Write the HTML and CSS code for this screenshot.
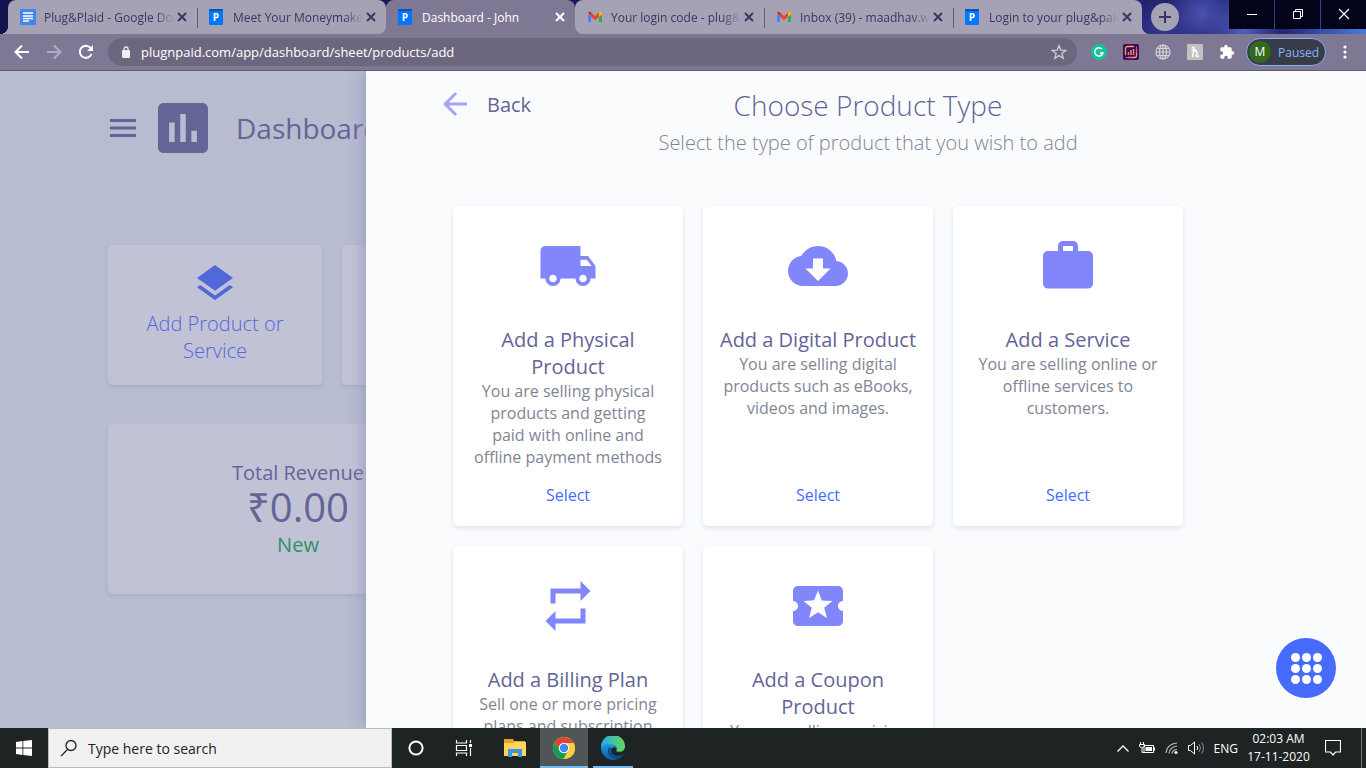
FILE: index.html
```html
<!DOCTYPE html>
<html lang="en">
  <head>
    <meta charset="utf-8">
    <title>Dashboard - John</title>
    <link rel="stylesheet" href="styles.css">
  </head>
  <body>
    <!-- shared icons -->
    <svg class="defs" width="0" height="0">
      <symbol id="close" viewBox="0 0 16 16"><path d="M4 4l8 8M12 4l-8 8" stroke="currentColor" stroke-width="2" fill="none"/></symbol>
      <symbol id="gmail" viewBox="0 0 16 16">
        <path d="M1 5v8h3V7z" fill="#4285f4"/><path d="M12 7v6h3V5z" fill="#34a853"/>
        <path d="M1 3.500L4 7V3.500Q2 2 1 4z" fill="#c5221f"/><path d="M12 3.500Q14 2 15 4v1.500L12 8z" fill="#fbbc04"/>
        <path d="M4 3.500L8 7l4-3.500V8l-4 3.200L4 8z" fill="#ea4335"/>
      </symbol>
    </svg>

    <header class="tabs">
      <div class="tab first">
        <svg class="fav" viewBox="0 0 16 16"><rect width="16" height="16" rx="1" fill="#4285f4"/><path d="M3 4h10M3 7h10M3 9.500h10M3 12h6" stroke="#fff" stroke-width="1.500"/></svg>
        <span class="tab-title">Plug&amp;Plaid - Google Docs</span>
        <button class="tab-close" aria-label="Close tab"><svg><use href="#close"/></svg></button>
      </div>
      <div class="tab line end">
        <span class="fav plug">P</span>
        <span class="tab-title">Meet Your Moneymaker</span>
        <button class="tab-close" aria-label="Close tab"><svg><use href="#close"/></svg></button>
      </div>
      <div class="tab active">
        <span class="fav plug">P</span>
        <span class="tab-title">Dashboard - John</span>
        <button class="tab-close" aria-label="Close tab"><svg><use href="#close"/></svg></button>
      </div>
      <div class="tab start">
        <svg class="fav"><use href="#gmail"/></svg>
        <span class="tab-title">Your login code - plug&amp;paid</span>
        <button class="tab-close" aria-label="Close tab"><svg><use href="#close"/></svg></button>
      </div>
      <div class="tab line">
        <svg class="fav"><use href="#gmail"/></svg>
        <span class="tab-title">Inbox (39) - maadhav.work</span>
        <button class="tab-close" aria-label="Close tab"><svg><use href="#close"/></svg></button>
      </div>
      <div class="tab line last">
        <span class="fav plug">P</span>
        <span class="tab-title">Login to your plug&amp;paid</span>
        <button class="tab-close" aria-label="Close tab"><svg><use href="#close"/></svg></button>
      </div>
      <button class="new-tab" aria-label="New tab"><svg width="14" height="14" viewBox="0 0 14 14"><path d="M7 1v12M1 7h12" stroke="#3c3560" stroke-width="2"/></svg></button>
      <div class="window-buttons">
        <button aria-label="Minimize"><svg width="12" height="12"><path d="M1 6.500h10" stroke="#fff"/></svg></button>
        <button aria-label="Restore"><svg width="12" height="12" fill="none" stroke="#fff"><path d="M1.500 3.500h7v7h-7zM3.500 3.500v-2h7v7h-2"/></svg></button>
        <button aria-label="Close"><svg width="12" height="12"><path d="M1 1l10 10M11 1L1 11" stroke="#fff" stroke-width="1.200"/></svg></button>
      </div>
    </header>

    <nav class="toolbar">
      <div class="tools">
        <button aria-label="Back"><svg width="16" height="16" viewBox="0 0 16 16"><path d="M15 8H2M8 1.500L1.500 8 8 14.500" fill="none" stroke="#fff" stroke-width="2"/></svg></button>
        <button aria-label="Forward"><svg width="16" height="16" viewBox="0 0 16 16"><path d="M1 8h13M8 1.500L14.500 8 8 14.500" fill="none" stroke="#b0abc0" stroke-width="2"/></svg></button>
        <button aria-label="Reload"><svg width="16" height="16" viewBox="0 0 16 16"><path d="M13.500 10A6 6 0 1 1 12.500 4" fill="none" stroke="#fff" stroke-width="2"/><path d="M15 1v6H9z" fill="#fff"/></svg></button>
      </div>
      <div class="address">
        <svg width="10" height="12" viewBox="0 0 10 12"><rect x="1" y="4" width="8" height="8" rx="1" fill="#eee"/><path d="M3 5V3a2 2 0 0 1 4 0v2" fill="none" stroke="#eee" stroke-width="1.300"/></svg>
        <input type="text" aria-label="Address" value="plugnpaid.com/app/dashboard/sheet/products/add">
        <svg width="16" height="16" viewBox="0 0 16 16"><path d="M8 1.500l1.800 4.600 4.900.3-3.800 3.100 1.300 4.800L8 11.600l-4.200 2.700 1.300-4.800L1.300 6.400l4.900-.3z" fill="none" stroke="#cfccd6" stroke-width="1.300"/></svg>
      </div>
      <div class="extensions">
        <svg viewBox="0 0 16 16"><circle cx="8" cy="8" r="8" fill="#15c39a"/><path d="M11 5a4.200 4.200 0 1 0 1 4H9" fill="none" stroke="#fff" stroke-width="1.500"/></svg>
        <svg viewBox="0 0 16 16"><rect width="16" height="16" rx="2" fill="#3b0d52"/><path d="M11 2.500H4.500a2 2 0 0 0-2 2V11M13.500 5v6.500a2 2 0 0 1-2 2H5" fill="none" stroke="#f59a70" stroke-width="1.300"/><path d="M2.500 13.500H9M13.500 2.500V9" stroke="#e84d9c"/><path d="M5.500 11V8M8 11V6M10.500 11V5" stroke="#f7845f" stroke-width="1.500"/></svg>
        <svg viewBox="0 0 16 16" fill="none" stroke="#d5d3da" stroke-width="1.200"><circle cx="8" cy="8" r="7"/><ellipse cx="8" cy="8" rx="3.500" ry="7"/><path d="M8 1v14M1 8h14M2 4.500h12M2 11.500h12"/></svg>
        <svg viewBox="0 0 16 16"><rect width="16" height="16" rx="1" fill="#c1c1c1"/><path d="M5 4q2-2 2 1l-1.500 8M6 9q2-3 3.500-1.500T9 12q1 1.500 3-.5M4.500 6h5" fill="none" stroke="#fff" stroke-width="1.400"/></svg>
        <svg viewBox="0 0 24 24"><path fill="#fff" d="M20.500 11H19V7c0-1.100-.9-2-2-2h-4V3.500a2.500 2.500 0 0 0-5 0V5H4c-1.100 0-2 .9-2 2v3.800h1.500a2.700 2.700 0 0 1 0 5.400H2V20c0 1.100.9 2 2 2h3.800v-1.500a2.700 2.700 0 0 1 5.400 0V22H17c1.100 0 2-.9 2-2v-4h1.500a2.500 2.500 0 0 0 0-5z"/></svg>
      </div>
      <button class="profile"><span class="avatar">M</span>Paused</button>
      <button class="dots" aria-label="Menu"><svg width="4" height="16" fill="#fff"><circle cx="2" cy="3" r="1.600"/><circle cx="2" cy="8" r="1.600"/><circle cx="2" cy="13" r="1.600"/></svg></button>
    </nav>

    <main class="app">
      <section class="dashboard">
        <div class="dash-header">
          <svg width="26" height="18" viewBox="3 6 18 12" preserveAspectRatio="none"><path fill="#646496" d="M3 18h18v-2H3v2zm0-5h18v-2H3v2zm0-7v2h18V6H3z"/></svg>
          <svg class="chart" width="50" height="50" viewBox="3 3 18 18"><path fill="#646496" d="M19 3H5c-1.100 0-2 .9-2 2v14c0 1.100.9 2 2 2h14c1.100 0 2-.9 2-2V5c0-1.100-.9-2-2-2zM9 17H7v-7h2v7zm4 0h-2V7h2v10zm4 0h-2v-4h2v4z"/></svg>
          <h1>Dashboard</h1>
        </div>
        <div class="quick">
          <a href="#" class="quick-card">
            <svg viewBox="3 2 18 19" preserveAspectRatio="none"><path fill="#5168d8" d="M11.990 18.540l-7.370-5.730L3 14.070l9 7 9-7-1.630-1.270-7.380 5.740zM12 16l7.360-5.730L21 9l-9-7-9 7 1.630 1.270L12 16z"/></svg>
            Add Product or Service
          </a>
          <div class="quick-card"></div>
        </div>
        <div class="stats">
          <div class="revenue">
            <div>Total Revenue</div>
            <div class="amount">₹0.00</div>
            <div class="new">New</div>
          </div>
        </div>
      </section>

      <section class="sheet">
        <div class="sheet-header">
          <button class="back">
            <svg width="24" height="24" viewBox="4 4 16 16"><path fill="#a3a5fb" d="M20 11H7.830l5.590-5.590L12 4l-8 8 8 8 1.410-1.410L7.830 13H20v-2z"/></svg>
            Back
          </button>
          <div class="heading">
            <h2>Choose Product Type</h2>
            <p>Select the type of product that you wish to add</p>
          </div>
        </div>
        <div class="products">
          <div class="card">
            <svg viewBox="0 0 24 24"><path d="M20 8h-3V4H3c-1.100 0-2 .9-2 2v11h2c0 1.660 1.340 3 3 3s3-1.340 3-3h6c0 1.660 1.340 3 3 3s3-1.340 3-3h2v-5l-3-4zM6 18.500c-.83 0-1.500-.67-1.500-1.500s.67-1.500 1.500-1.500 1.500.67 1.500 1.500-.67 1.500-1.500 1.500zm13.500-9l1.960 2.500H17V9.500h2.500zm-1.500 9c-.83 0-1.500-.67-1.500-1.500s.67-1.500 1.500-1.500 1.500.67 1.500 1.500-.67 1.500-1.500 1.500z"/></svg>
            <h3>Add a Physical Product</h3>
            <p>You are selling physical products and getting paid with online and offline payment methods</p>
            <a href="#">Select</a>
          </div>
          <div class="card">
            <svg viewBox="0 0 24 24"><path d="M19.350 10.040C18.670 6.590 15.640 4 12 4 9.110 4 6.600 5.640 5.350 8.040 2.340 8.360 0 10.910 0 14c0 3.310 2.690 6 6 6h13c2.760 0 5-2.240 5-5 0-2.640-2.050-4.780-4.650-4.960zM17 13l-5 5-5-5h3V9h4v4h3z"/></svg>
            <h3>Add a Digital Product</h3>
            <p>You are selling digital products such as eBooks, videos and images.</p>
            <a href="#">Select</a>
          </div>
          <div class="card">
            <svg viewBox="0 0 24 24"><path d="M20 6h-4V4c0-1.110-.89-2-2-2h-4c-1.110 0-2 .89-2 2v2H4c-1.110 0-2 .89-2 2v11c0 1.110.89 2 2 2h16c1.110 0 2-.89 2-2V8c0-1.110-.89-2-2-2zm-6 0h-4V4h4v2z"/></svg>
            <h3>Add a Service</h3>
            <p>You are selling online or offline services to customers.</p>
            <a href="#">Select</a>
          </div>
          <div class="card">
            <svg viewBox="0 0 24 24"><path d="M7 7h10v3l4-4-4-4v3H5v6h2V7zm10 10H7v-3l-4 4 4 4v-3h12v-6h-2v4z"/></svg>
            <h3>Add a Billing Plan</h3>
            <p>Sell one or more pricing plans and subscription products.</p>
            <a href="#">Select</a>
          </div>
          <div class="card">
            <svg viewBox="0 0 24 24"><path d="M20 12c0-1.100.9-2 2-2V6c0-1.100-.9-2-2-2H4c-1.100 0-1.990.9-1.990 2v4c1.100 0 1.990.9 1.990 2s-.89 2-2 2v4c0 1.100.9 2 2 2h16c1.100 0 2-.9 2-2v-4c-1.100 0-2-.9-2-2zm-4.420 4.800L12 14.500l-3.580 2.300 1.080-4.120-3.290-2.690 4.240-.25L12 5.800l1.540 3.950 4.240.25-3.290 2.690 1.090 4.110z"/></svg>
            <h3>Add a Coupon Product</h3>
            <p>You are selling a pricing coupon to your customers.</p>
            <a href="#">Select</a>
          </div>
        </div>
      </section>

      <button class="fab" aria-label="Apps">
        <i></i><i></i><i></i><i></i><i></i><i></i><i></i><i></i><i></i>
      </button>
    </main>

    <footer class="taskbar">
      <button class="task" aria-label="Start"><svg width="16" height="16" viewBox="0 0 16 16" fill="#fff"><path d="M0 2l6.500-.9v6.500H0zM7.300 1L16 0v7.600H7.300zM0 8.400h6.500v6.500L0 14zM7.300 8.400H16V16l-8.700-1z"/></svg></button>
      <label class="search">
        <svg width="18" height="18" viewBox="0 0 18 18" fill="none" stroke="#222" stroke-width="1.300"><circle cx="11" cy="6.500" r="5"/><path d="M7.500 10.500L1 17"/></svg>
        <input type="text" aria-label="Search" placeholder="Type here to search">
      </label>
      <button class="task" aria-label="Cortana"><svg width="18" height="18"><circle cx="9" cy="9" r="6.600" fill="none" stroke="#fff" stroke-width="2"/></svg></button>
      <button class="task" aria-label="Task View"><svg width="18" height="18" fill="none" stroke="#fff" stroke-width="1.200"><path d="M1.500 1v3h10V1M1.500 17v-3h10v3M1.500 6.500h10v5h-10zM15.500 1v3M15.500 9v8"/><path d="M14 5h3v3h-3z" fill="#fff" stroke="none"/></svg></button>
      <button class="task files" aria-label="File Explorer"><svg width="22" height="18" viewBox="0 0 22 18"><path d="M0 0h9l1 2h11v15H0z" fill="#e6a416"/><path d="M0 4h9l1-1h12v14H0z" fill="#ffd562"/><path d="M4 18v-8h14v8h-4v-4H8v4z" fill="#3a96dd"/></svg></button>
      <button class="task current" aria-label="Chrome"><svg width="22" height="22" viewBox="0 0 22 22"><circle cx="11" cy="11" r="11" fill="#ffcd40"/><path d="M11 11H22A11 11 0 0 0 1.500 5.500L6.500 13z" fill="#db4437"/><path d="M1.500 5.500A11 11 0 0 0 10.500 22l5-8.500H7z" fill="#0f9d58"/><path d="M11 6h9.800q1.200 2 1.200 5 0 10-11.500 11l5-8.500z" fill="#ffcd40"/><circle cx="11" cy="11" r="5.200" fill="#fff"/><circle cx="11" cy="11" r="4.200" fill="#4285f4"/></svg></button>
      <button class="task edge" aria-label="Edge">
        <svg width="24" height="24" viewBox="0 0 24 24">
          <defs>
            <linearGradient id="edge-top"><stop offset="0" stop-color="#2aa9e8"/><stop offset="1" stop-color="#62d957"/></linearGradient>
            <linearGradient id="edge-body" x2="0" y2="1"><stop offset="0" stop-color="#1b9de2"/><stop offset="1" stop-color="#0c59a4"/></linearGradient>
          </defs>
          <path d="M0 11A12 12 0 0 1 24 10.500c0 5-5 6.500-9 4.500 2-2 0-6-4-6Q5 8 0 13z" fill="url(#edge-top)"/>
          <path d="M0 12q3-5 8-4 6 0 7 4-4-2-5 2 0 6 7 6 3 0 5-1.500A12 12 0 0 1 0 12z" fill="url(#edge-body)"/>
          <path d="M8 11q-3 5 1 9t8 3.200q4-2 5.500-5-5 2.800-9.500.800-5-3-3-7z" fill="#114a8b"/>
        </svg>
      </button>
      <div class="tray">
        <svg width="12" height="7"><path d="M.500 6.500L6 1l5.500 5.500" fill="none" stroke="#fff" stroke-width="1.300"/></svg>
        <svg width="16" height="12" fill="none" stroke="#fff"><path d="M5 3.500h9.500v7h-9.500zM15.500 5.500v3M1.500 0v3M4.500 0v3M.500 2.500h5v2l-2 1h-1l-2-1zM3 5.500v5h2"/><path d="M6.500 5h6.500v4H6.500z" fill="#fff" stroke="none"/></svg>
        <svg width="13" height="12" fill="none" stroke="#bbb" stroke-width="1.200"><path d="M1 11Q2 2 12 1M4 11.500Q5 5 12 4M7 11.500q1-4 5-4"/><circle cx="11" cy="10.500" r="1.500" fill="#fff" stroke="none"/></svg>
        <svg width="16" height="14" fill="none" stroke="#fff"><path d="M.500 4.500h2l4-3.500v12l-4-3.500h-2z"/><path d="M9 5q1.500 2 0 4"/><path d="M11 3q3 4 0 8M13.500 1q4 6 0 12" stroke="#888"/></svg>
        <span>ENG</span>
      </div>
      <div class="clock"><div>02:03 AM</div><div>17-11-2020</div></div>
      <button class="notes" aria-label="Notifications"><svg width="16" height="16"><path d="M.500.500h15v11.500h-5L8 15l-2.500-3h-5z" fill="none" stroke="#fff" stroke-width="1.200"/></svg></button>
    </footer>
  </body>
</html>
```
FILE: styles.css
```css
* {
  box-sizing: border-box;
}
body {
  margin: 0;
  height: 100vh;
  display: flex;
  flex-direction: column;
  overflow: hidden;
  font-family: "Open Sans", "Noto Sans", sans-serif;
}
h1, h2, h3, p {
  margin: 0;
  font-weight: 400;
}
button {
  border: none;
  padding: 0;
  background: none;
  font-family: inherit;
}
svg {
  flex: none;
}
a {
  text-decoration: none;
}
.defs {
  position: absolute;
}

/* browser tabs */
.tabs {
  position: relative;
  z-index: 0;
  display: flex;
  height: 34px;
  padding-left: 8px;
  background: radial-gradient(circle at 88% 40%, #4a52b0, transparent 3%),
    radial-gradient(circle at 91% 90%, #4f62bd, transparent 3%),
    radial-gradient(circle at 85% 100%, #33388f, transparent 3%),
    radial-gradient(circle at 100% 100%, #4a7be0, transparent 6%),
    linear-gradient(90deg, #17134f, #1f1c62 70%, #27297c);
}
.tab {
  position: relative;
  display: flex;
  align-items: center;
  flex: 0 1 189px;
  min-width: 0;
  padding: 0 7px 0 12px;
  background: #a6a2b6;
  color: #3c3560;
  font-size: 12px;
}
.tab.first,
.tab.start {
  border-top-left-radius: 8px;
}
.tab.start {
  border-bottom-left-radius: 8px;
}
.tab.end {
  border-radius: 0 8px 8px 0;
}
.tab.last {
  border-top-right-radius: 8px;
}
.tab.active {
  background: #7f7894;
  color: #fff;
  border-radius: 8px 8px 0 0;
}
/* feet of the active tab, under the corners next to it */
.tab.active::before,
.tab.active::after {
  content: "";
  position: absolute;
  z-index: -1;
  bottom: 0;
  width: 8px;
  height: 8px;
  background: #7f7894;
}
.tab.active::before {
  left: -8px;
}
.tab.active::after {
  right: -8px;
}
.tab.first::before,
.tab.last::after {
  content: "";
  position: absolute;
  bottom: 0;
  width: 8px;
  height: 8px;
}
.tab.first::before {
  left: -8px;
  background: radial-gradient(circle at 0 0, transparent 8px, #a6a2b6 8px);
}
.tab.last::after {
  right: -8px;
  background: radial-gradient(circle at 100% 0, transparent 8px, #a6a2b6 8px);
}
.tab.line::before {
  content: "";
  position: absolute;
  left: 0;
  top: 8px;
  width: 1px;
  height: 20px;
  background: #625b80;
}
.fav {
  width: 16px;
  height: 16px;
  margin-right: 8px;
  flex: none;
}
.plug {
  width: 14px;
  margin-right: 10px;
  border-top: 2px solid #0056b8;
  border-radius: 1px;
  background: #0077ff;
  color: #fff;
  font-size: 10px;
  font-weight: 700;
  line-height: 13px;
  text-align: center;
}
.tab-title {
  flex: 1;
  overflow: hidden;
  white-space: nowrap;
  mask-image: linear-gradient(90deg, #000 86%, transparent);
}
.active .tab-title {
  mask-image: none;
}
.tab-close {
  width: 16px;
  height: 16px;
  color: inherit;
}
.tab-close svg {
  display: block;
  width: 16px;
  height: 16px;
}
.new-tab {
  display: flex;
  align-items: center;
  justify-content: center;
  flex: none;
  width: 28px;
  height: 28px;
  margin: 3px 0 0 9px;
  border-radius: 50%;
  background: #a6a2b6;
}
.window-buttons {
  display: flex;
  gap: 1px;
  height: 29px;
  margin-left: auto;
  background: #2c4496;
}
.window-buttons button {
  width: 45px;
  background: #03041a;
}

/* address bar */
.toolbar {
  display: flex;
  align-items: center;
  height: 37px;
  padding: 0 11px 0 14px;
  background: #7f7894;
  border-bottom: 1px solid #5f5a74;
}
.tools {
  display: flex;
  gap: 16px;
  margin-right: 14px;
}
.tools svg {
  display: block;
}
.address {
  display: flex;
  align-items: center;
  gap: 10px;
  flex: 1;
  height: 28px;
  padding: 0 10px 0 13px;
  border-radius: 14px;
  background: #6c677e;
}
.address input {
  flex: 1;
  border: none;
  outline: none;
  background: none;
  color: #fff;
  font: 13px "Open Sans", sans-serif;
  padding: 0;
}
.extensions {
  display: flex;
  gap: 16px;
  margin: 0 11px 0 14px;
}
.extensions svg {
  width: 16px;
  height: 16px;
}
.profile {
  display: flex;
  align-items: center;
  gap: 7px;
  width: 80px;
  height: 28px;
  padding-left: 2px;
  border: 1px solid #7fb0f5;
  border-radius: 14px;
  background: #383b48;
  color: #8ab4f8;
  font-size: 12px;
}
.avatar {
  width: 22px;
  height: 22px;
  border-radius: 50%;
  background: #33691e;
  color: #fff;
  line-height: 22px;
}
.dots {
  width: 20px;
  margin-left: 9px;
}
.dots svg {
  display: block;
  margin: auto;
}

/* page */
.app {
  position: relative;
  flex: 1;
  min-height: 0;
  overflow: hidden;
  background: #b8bcd1;
}
.dashboard {
  padding: 32px 108px;
  color: #646496;
}
.dash-header {
  display: flex;
  align-items: center;
  height: 50px;
  padding-left: 2px;
}
.chart {
  margin: 0 28px 0 22px;
}
.dash-header h1 {
  font-size: 28px;
}
.quick {
  display: grid;
  grid-template-columns: repeat(5, 1fr);
  gap: 20px;
  margin-top: 92px;
}
.quick-card,
.revenue {
  border-radius: 5px;
  background: #c2c2d7;
  box-shadow: 0 2px 4px #a5aecb;
  text-align: center;
  font-size: 20px;
  line-height: 27px;
}
.quick-card {
  display: flex;
  flex-direction: column;
  align-items: center;
  height: 140px;
  padding: 20px 30px;
  color: #5168d8;
  font-weight: 300;
}
.quick-card svg {
  width: 36px;
  height: 35px;
  margin-bottom: 10px;
}
.stats {
  display: grid;
  grid-template-columns: repeat(3, 1fr);
  gap: 5px;
  margin-top: 39px;
}
.revenue {
  height: 170px;
  padding-top: 35px;
}
.amount {
  font-size: 40px;
  line-height: 42px;
}
.new {
  margin-top: 3px;
  color: #2b9267;
}

/* sheet that slides over the dashboard */
.sheet {
  position: absolute;
  top: 0;
  right: 0;
  bottom: 0;
  width: 1000px;
  max-width: 100%;
  padding: 15px 73px 0 77px;
  overflow: hidden;
  background: #fafbfd;
  box-shadow: 0 0 16px #8f92b8;
}
.sheet-header {
  display: grid;
  grid-template-columns: 1fr auto 1fr;
  align-items: start;
}
.back {
  display: flex;
  align-items: center;
  gap: 20px;
  justify-self: start;
  height: 36px;
  color: #646496;
  font-size: 20px;
}
.heading {
  text-align: center;
}
.heading h2 {
  color: #646496;
  font-size: 28px;
  font-weight: 300;
  line-height: 38px;
}
.heading p {
  margin-top: 5px;
  color: #7f8596;
  font-size: 20px;
  font-weight: 300;
  line-height: 27px;
}
.products {
  display: grid;
  grid-template-columns: repeat(auto-fill, 230px);
  gap: 20px;
  margin-top: 50px;
  padding: 0 10px;
}
.card {
  display: flex;
  flex-direction: column;
  align-items: center;
  min-height: 320px;
  padding: 30px 16px 20px;
  border-radius: 5px;
  background: #fff;
  box-shadow: 0 2px 5px #dbe5f0;
  text-align: center;
}
.card svg {
  width: 60px;
  height: 60px;
  margin-bottom: 30px;
  fill: #8286fb;
}
.card h3 {
  color: #646496;
  font-size: 20px;
  line-height: 27px;
}
.card p {
  padding: 0 4px;
  color: #7f8596;
  font-size: 16px;
  line-height: 22px;
}
.card a {
  margin-top: auto;
  color: #476bff;
  font-size: 16px;
  line-height: 22px;
}
.fab {
  position: absolute;
  right: 30px;
  bottom: 30px;
  display: grid;
  grid-template-columns: repeat(3, 9px);
  gap: 2px;
  place-content: center;
  width: 60px;
  height: 60px;
  border-radius: 50%;
  background: #476bff;
}
.fab i {
  width: 9px;
  height: 9px;
  border-radius: 50%;
  background: #fff;
}

/* windows taskbar */
.taskbar {
  display: flex;
  height: 40px;
  background: #1e2324;
  color: #fff;
  font-size: 12px;
}
.search {
  display: flex;
  align-items: center;
  gap: 10px;
  width: 344px;
  padding-left: 11px;
  border: 1px solid #bbb;
  background: #f1f1f1;
}
.search input {
  flex: 1;
  border: none;
  outline: none;
  background: none;
  padding: 0;
  font: 14px "Open Sans", sans-serif;
}
.search input::placeholder {
  color: #222;
}
.task {
  display: flex;
  align-items: center;
  justify-content: center;
  width: 48px;
  padding-top: 2px;
  border-bottom: 2px solid transparent;
}
.files {
  margin-left: 3px;
}
.current {
  margin-left: 1px;
  background: #505658;
  border-color: #76b9ed;
}
.edge {
  width: 40px;
  margin-left: 5px;
  border-color: #76b9ed;
}
.tray {
  display: flex;
  align-items: center;
  gap: 10px;
  margin-left: auto;
}
.clock {
  width: 81px;
  padding-top: 2px;
  line-height: 18px;
  text-align: center;
}
.notes {
  width: 43px;
  margin-right: 4px;
  border-right: 1px solid #777;
}
.notes svg {
  display: block;
  margin-left: 6px;
}
```
